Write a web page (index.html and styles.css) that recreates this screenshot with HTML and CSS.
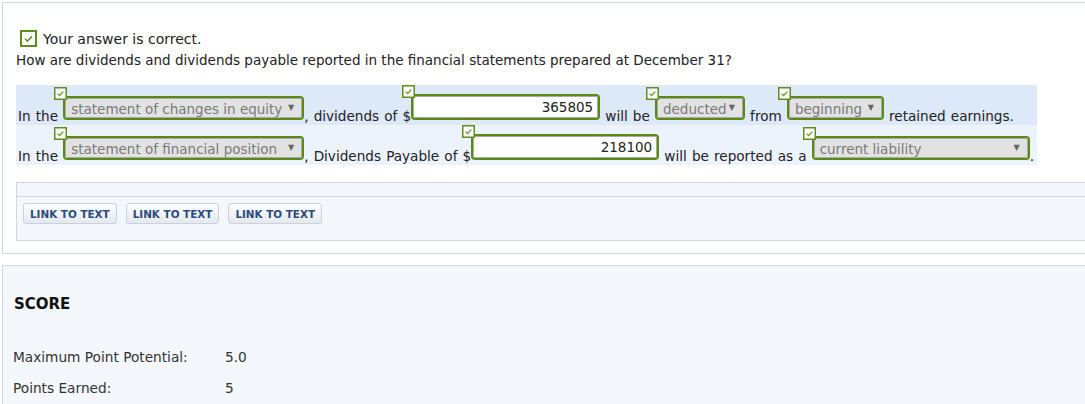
FILE: index.html
```html
<!DOCTYPE html>
<html lang="en">
<head>
    <meta charset="UTF-8">
    <title>Question Review</title>
    <link rel="stylesheet" href="styles.css">
</head>
<body>

<div class="panel question">
    <p class="result">
        <svg class="ok-box" width="17" height="17" viewBox="0 0 17 17"><rect x="1" y="1" width="15" height="15" fill="#fff" stroke="#5f8f1b" stroke-width="2"/><path d="M5 8.8 L7.4 11.2 L12 6.4" fill="none" stroke="#5f8f1b" stroke-width="1.6"/></svg>Your answer is correct.
    </p>
    <p class="prompt">How are dividends and dividends payable reported in the financial statements prepared at December 31?</p>

    <div class="answers">
        <div class="answer-row row-odd">In the <span class="field pick w-equity"><svg class="tick" width="13" height="13" viewBox="0 0 13 13"><rect x="0.75" y="0.75" width="11.5" height="11.5" fill="#fff" stroke="#5f8f1b" stroke-width="1.5"/><path d="M3.6 6.6 L5.6 8.5 L9.4 4.6" fill="none" stroke="#6a9a25" stroke-width="1.3"/></svg><select class="pick-box"><option>statement of changes in equity</option></select></span>, dividends of $<span class="field num w-num1"><svg class="tick" width="13" height="13" viewBox="0 0 13 13"><rect x="0.75" y="0.75" width="11.5" height="11.5" fill="#fff" stroke="#5f8f1b" stroke-width="1.5"/><path d="M3.6 6.6 L5.6 8.5 L9.4 4.6" fill="none" stroke="#6a9a25" stroke-width="1.3"/></svg><input class="num-box" type="text" value="365805"></span> will be <span class="field pick w-deducted"><svg class="tick" width="13" height="13" viewBox="0 0 13 13"><rect x="0.75" y="0.75" width="11.5" height="11.5" fill="#fff" stroke="#5f8f1b" stroke-width="1.5"/><path d="M3.6 6.6 L5.6 8.5 L9.4 4.6" fill="none" stroke="#6a9a25" stroke-width="1.3"/></svg><select class="pick-box"><option>deducted</option></select></span> from <span class="field pick w-beginning"><svg class="tick" width="13" height="13" viewBox="0 0 13 13"><rect x="0.75" y="0.75" width="11.5" height="11.5" fill="#fff" stroke="#5f8f1b" stroke-width="1.5"/><path d="M3.6 6.6 L5.6 8.5 L9.4 4.6" fill="none" stroke="#6a9a25" stroke-width="1.3"/></svg><select class="pick-box"><option>beginning</option></select></span> retained earnings.</div>
        <div class="answer-row row-even">In the <span class="field pick w-equity"><svg class="tick" width="13" height="13" viewBox="0 0 13 13"><rect x="0.75" y="0.75" width="11.5" height="11.5" fill="#fff" stroke="#5f8f1b" stroke-width="1.5"/><path d="M3.6 6.6 L5.6 8.5 L9.4 4.6" fill="none" stroke="#6a9a25" stroke-width="1.3"/></svg><select class="pick-box"><option>statement of financial position</option></select></span>, Dividends Payable of $<span class="field num w-num2"><svg class="tick" width="13" height="13" viewBox="0 0 13 13"><rect x="0.75" y="0.75" width="11.5" height="11.5" fill="#fff" stroke="#5f8f1b" stroke-width="1.5"/><path d="M3.6 6.6 L5.6 8.5 L9.4 4.6" fill="none" stroke="#6a9a25" stroke-width="1.3"/></svg><input class="num-box" type="text" value="218100"></span> will be reported as a <span class="field pick w-liability"><svg class="tick" width="13" height="13" viewBox="0 0 13 13"><rect x="0.75" y="0.75" width="11.5" height="11.5" fill="#fff" stroke="#5f8f1b" stroke-width="1.5"/><path d="M3.6 6.6 L5.6 8.5 L9.4 4.6" fill="none" stroke="#6a9a25" stroke-width="1.3"/></svg><select class="pick-box"><option>current liability</option></select></span>.</div>
    </div>

    <div class="links">
        <div class="links-head"></div>
        <div class="links-body">
            <button class="link-btn">Link to Text</button>
            <button class="link-btn">Link to Text</button>
            <button class="link-btn">Link to Text</button>
        </div>
    </div>
</div>

<div class="panel score">
    <h2 class="score-title">SCORE</h2>
    <div class="score-grid">
        <span>Maximum Point Potential:</span><span>5.0</span>
        <span>Points Earned:</span><span>5</span>
    </div>
</div>

</body>
</html>
```

FILE: styles.css
```css
body { margin: 0; font-family: Verdana, "DejaVu Sans", sans-serif; font-size: 13.5px; color: #222; overflow: hidden; }
p { margin: 0; }

.panel { border: 1px solid #cfd7e3; border-right: 0; margin-left: 2px; }
.question { margin-top: 2px; padding: 0 0 12px 13px; }

.result { padding-top: 26px; line-height: 20px; font-size: 14px; }
.ok-box { vertical-align: -3px; margin: 0 6px 0 4px; }
.prompt { line-height: 20px; margin-top: 1px; }

.answers { width: 1021px; margin-top: 15px; }
.answer-row {
    height: 40px;
    box-sizing: border-box;
    padding: 9px 2px 0;
    line-height: 20px;
    font-size: 13.6px;
    word-spacing: 0.8px;
    white-space: nowrap;
}
.row-odd { background-color: #dde8f8; }
.row-even { background-color: #edf3fd; }

.field {
    position: relative;
    display: inline-block;
    box-sizing: border-box;
    border: 2px solid #5b8a12;
    border-radius: 4px;
    vertical-align: text-bottom;
    margin-bottom: 4px;
    line-height: normal;
    word-spacing: normal;
}
.tick { position: absolute; left: -11px; top: -11px; }
.pick::after {
    content: "\25BC";
    position: absolute;
    right: 8px;
    top: 6px;
    font-size: 8px;
    line-height: 8px;
    color: #666;
}
.pick-box {
    display: block;
    width: 100%;
    height: 20px;
    box-sizing: border-box;
    appearance: none;
    -webkit-appearance: none;
    margin: 0;
    padding: 1px 0 0 5px;
    border: 1px solid #a9a9a9;
    border-radius: 3px;
    background-color: #e2e2e2;
    color: #7a7a7a;
    font: inherit;
    font-size: 13.5px;
}
.num-box {
    display: block;
    width: 100%;
    height: 22px;
    box-sizing: border-box;
    margin: 0;
    padding: 0 4px 0 0;
    border: 1px solid #a9a9a9;
    border-radius: 2px;
    background: #fff;
    color: #222;
    font: inherit;
    font-size: 13.5px;
    text-align: right;
}
.w-equity { width: 241px; }
.w-deducted { width: 90px; }
.w-beginning { width: 97px; }
.w-liability { width: 218px; }
.w-num1 { width: 189px; }
.w-num2 { width: 188px; }

.links { margin-top: 17px; border: 1px solid #cfd7e3; border-right: 0; background-color: #f4f7fb; }
.links-head { height: 13px; border-bottom: 1px solid #cfd7e3; }
.links-body { padding: 6px 0 16px 6px; display: flex; gap: 9px; }
.link-btn {
    height: 21px;
    padding: 0 6px;
    border: 1px solid #c9d1dd;
    border-radius: 3px;
    background: linear-gradient(#fdfdfe, #e4e9ef);
    color: #2b4a7e;
    font-family: Verdana, "DejaVu Sans", sans-serif;
    font-size: 10.4px;
    font-weight: bold;
    text-transform: uppercase;
}

.score { margin-top: 11px; padding: 28px 0 40px 10px; background-color: #f4f7fb; }
.score-title { margin: 0 0 0 1px; font-size: 15px; line-height: 20px; color: #111; }
.score-grid {
    display: grid;
    grid-template-columns: 212px auto;
    row-gap: 11px;
    margin-top: 33px;
    line-height: 20px;
    font-size: 13.7px;
    color: #333;
}
```
